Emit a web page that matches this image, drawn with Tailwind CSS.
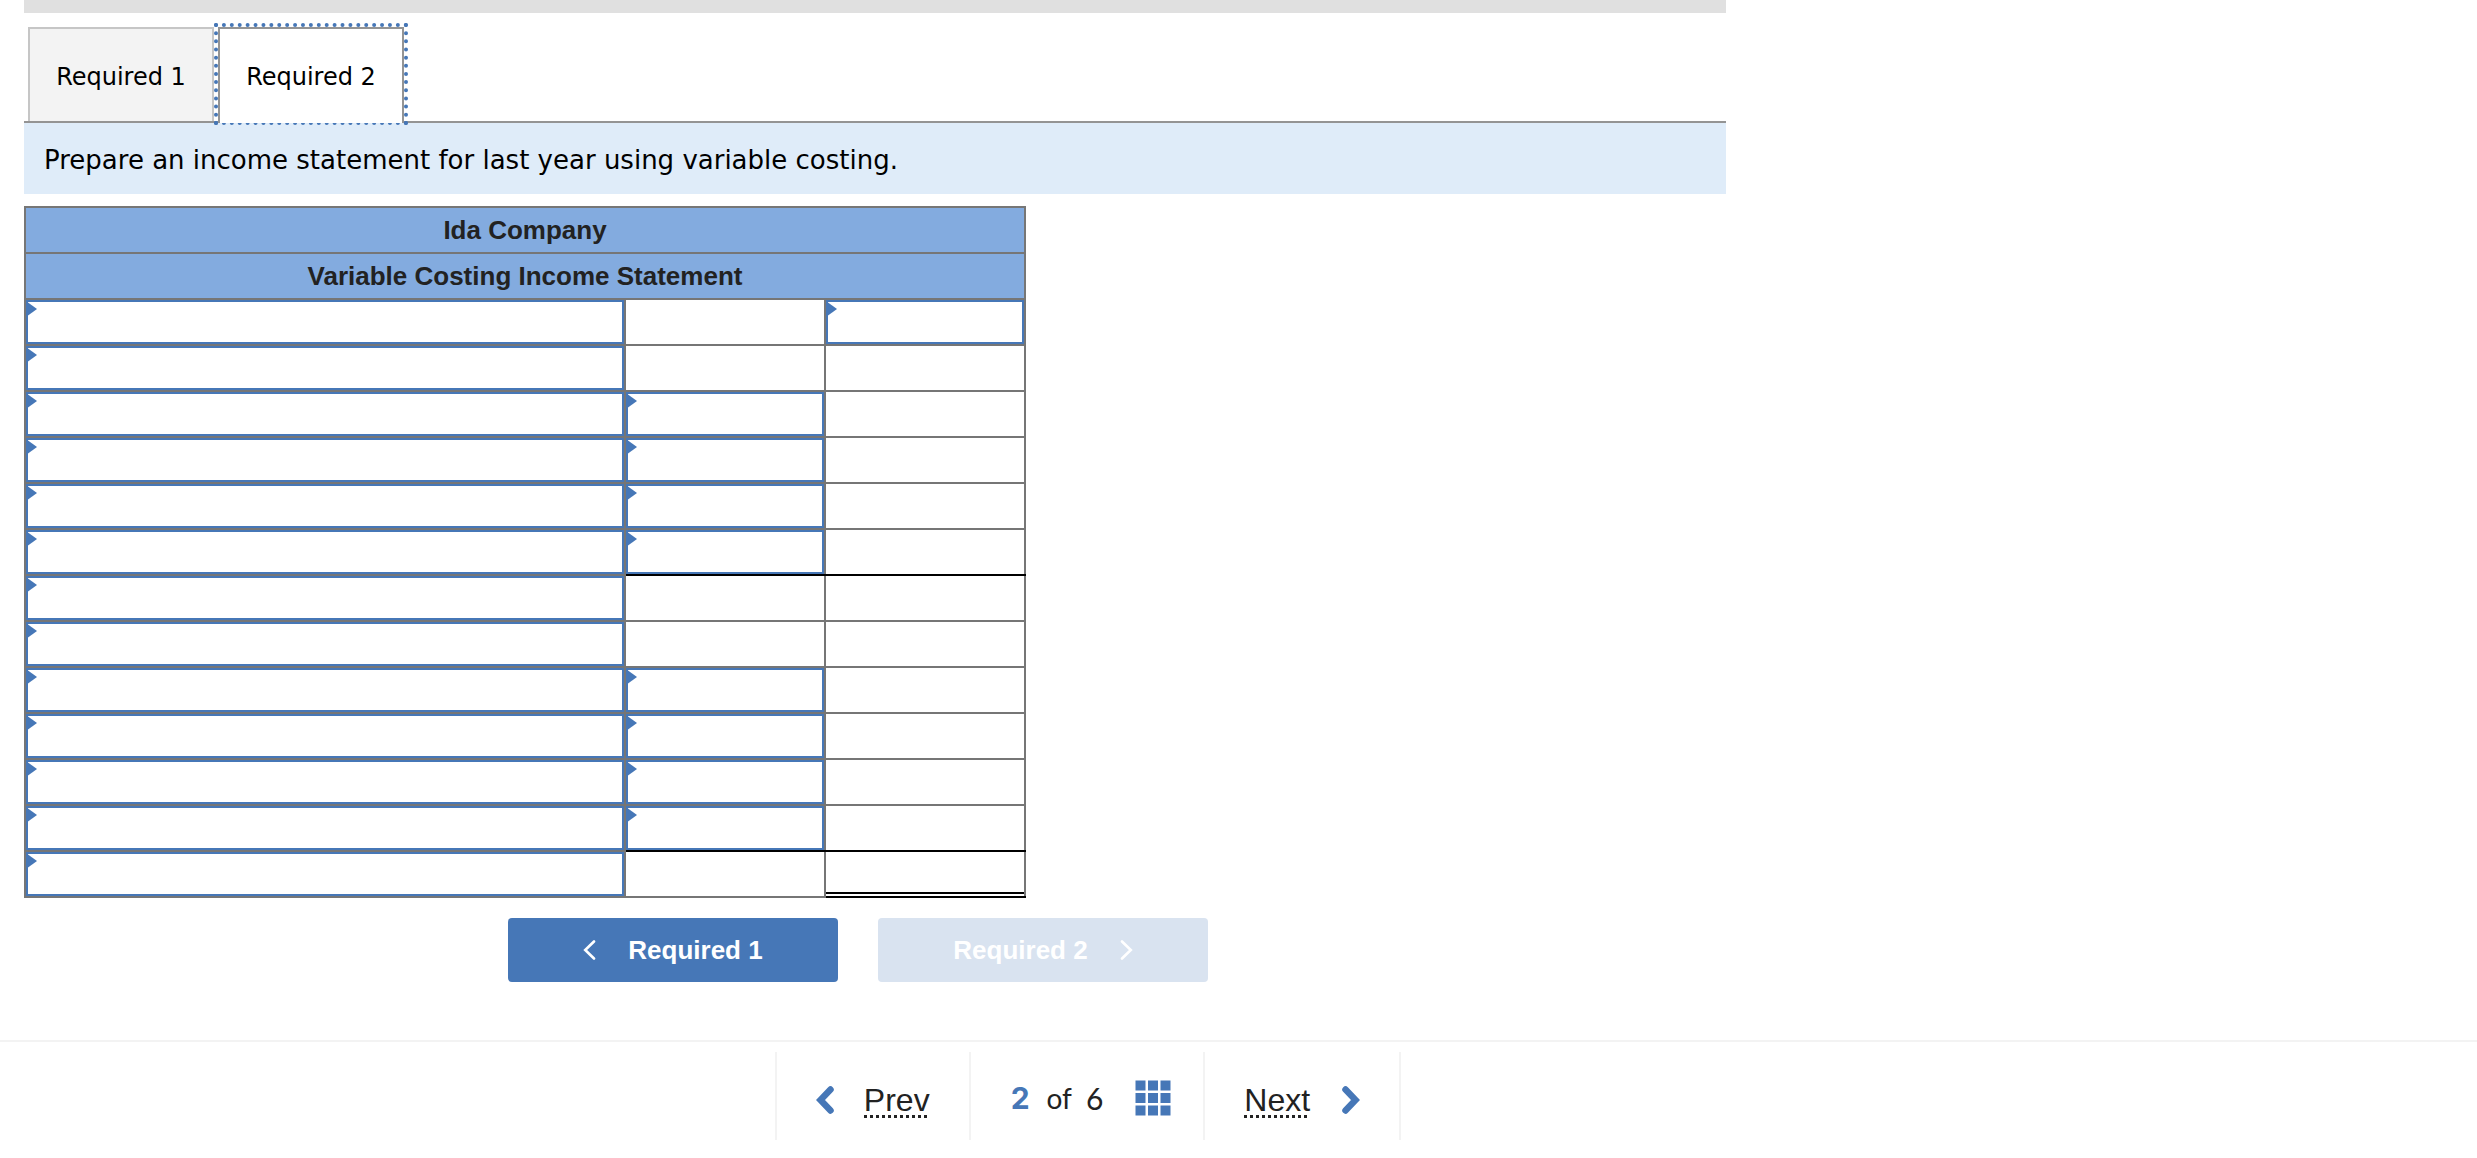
<!DOCTYPE html>
<html lang="en">
<head>
<meta charset="utf-8">
<meta name="viewport" content="width=device-width, initial-scale=1">
<title>Ida Company</title>
<script src="https://cdn.jsdelivr.net/npm/@tailwindcss/browser@4"></script>
</head>
<body class="bg-white font-['Liberation_Sans',Arial,sans-serif] text-[#222]">

<main class="mx-6 max-w-[1702px]">
  <div class="h-[13px] bg-[#e0e0e0]"></div>

  <div role="tablist" class="mt-[14px] flex h-24 items-start gap-1 border-b-2 border-[#949494] pl-1 font-['DejaVu_Sans',Verdana,sans-serif] text-[24px] text-black">
    <button role="tab" aria-selected="false" class="h-[94px] w-[186px] border-2 border-b-0 border-[#c6c6c6] bg-[#f3f3f3] pt-1">Required 1</button>
    <button role="tab" aria-selected="true" class="relative h-[94px] w-[186px] border-2 border-b-0 border-[#949494] bg-white pt-1 outline-4 outline-dotted outline-[#4677b7]">Required 2<span class="absolute inset-x-0 top-full z-10 h-[2px] bg-white"></span></button>
  </div>

  <p class="bg-[#dfecf9] px-5 pt-[19px] pb-[15px] font-['DejaVu_Sans',Verdana,sans-serif] text-[26px] leading-[37px] text-black">Prepare an income statement for last year using variable costing.</p>

  <table class="mt-3 w-full max-w-[1002px] table-fixed border-collapse text-[26px] leading-[44px]">
    <colgroup><col class="w-3/5"><col class="w-1/5"><col class="w-1/5"></colgroup>
    <thead>
      <tr><th colspan="3" class="h-[46px] border-2 border-[#767676] bg-[#83abdf] p-0 text-center font-bold">Ida Company</th></tr>
      <tr><th colspan="3" class="h-[46px] border-2 border-[#767676] bg-[#83abdf] p-0 text-center font-bold">Variable Costing Income Statement</th></tr>
    </thead>
    <tbody id="rows"></tbody>
  </table>

  <div class="mt-5 flex justify-center gap-10 pr-[34px] text-[26px] font-bold text-white">
    <button class="flex h-16 w-[330px] items-center justify-center gap-8 rounded-[4px] bg-[#4677b7]">
      <svg class="h-5 w-[13px]" viewBox="0 0 13 20" fill="none" stroke="currentColor" stroke-width="2.6" stroke-linecap="round"><path d="M11 1.5 2.2 10 11 18.5"/></svg>
      <span>Required 1</span>
    </button>
    <button disabled class="flex h-16 w-[330px] items-center justify-center gap-8 rounded-[4px] bg-[#d9e3f0]">
      <span>Required 2</span>
      <svg class="h-5 w-[13px]" viewBox="0 0 13 20" fill="none" stroke="currentColor" stroke-width="2.6" stroke-linecap="round"><path d="M2 1.5 10.8 10 2 18.5"/></svg>
    </button>
  </div>
</main>

<footer class="mt-[58px] flex justify-center border-t-2 border-[#f3f3f3] pt-[10px] pr-[301px]">
  <nav aria-label="Questions" class="flex h-[88px] divide-x-2 divide-[#f3f3f3] border-x-2 border-[#f3f3f3]">
    <a href="#" class="flex items-center gap-[30px] px-[39px] pt-2 text-[32px]">
      <svg class="h-7 w-[18px] text-[#4677b7]" viewBox="0 0 18 28" fill="none" stroke="currentColor" stroke-width="6.5" stroke-linecap="round" stroke-linejoin="miter"><path d="M14.500 3.500 4.500 14 14.500 24.500"/></svg>
      <span class="bg-[repeating-linear-gradient(90deg,#222_0_3px,transparent_3px_6px)] bg-[length:100%_3px] bg-bottom bg-no-repeat leading-[36px]">Prev</span>
    </a>
    <div class="flex items-center pr-8 pl-10 pt-1 font-['Lato',sans-serif] text-[30px]">
      <b class="font-['Inter',sans-serif] text-[#4677b7]">2</b>
      <span class="ml-[17px] text-[28px]">of</span>
      <span class="ml-[14px]">6</span>
      <button aria-label="Question list" class="ml-8 text-[#4677b7]">
        <svg class="h-9 w-9" viewBox="0 0 36 36" fill="currentColor"><path d="M.5.5h10v10H.5zM13 .5h10v10H13zM25.5.5h10v10h-10zM.5 13h10v10H.5zM13 13h10v10H13zM25.5 13h10v10h-10zM.5 25.500h10v10H.5zM13 25.500h10v10H13zM25.5 25.500h10v10h-10z"/></svg>
      </button>
    </div>
    <a href="#" class="flex items-center gap-8 px-[39px] pt-2 text-[32px]">
      <span class="bg-[repeating-linear-gradient(90deg,#222_0_3px,transparent_3px_6px)] bg-[length:100%_3px] bg-bottom bg-no-repeat leading-[36px]">Next</span>
      <svg class="h-7 w-[18px] text-[#4677b7]" viewBox="0 0 18 28" fill="none" stroke="currentColor" stroke-width="6.5" stroke-linecap="round" stroke-linejoin="miter"><path d="M3.500 3.500 13.500 14 3.500 24.500"/></svg>
    </a>
  </nav>
</footer>

<script>
  // One entry per statement line: which cells take an entry (1) and how the amount cells are ruled.
  const lines = [
    [1, 0, 1], [1, 0, 0], [1, 1, 0], [1, 1, 0], [1, 1, 0], [1, 1, 0, 'total'], [1, 0, 0],
    [1, 0, 0], [1, 1, 0], [1, 1, 0], [1, 1, 0], [1, 1, 0, 'total'], [1, 0, 0, 'final']
  ];
  const names = ['description', 'amount', 'total'];
  const entry = (label) => `<div class="relative h-[44px]"><input type="text" aria-label="${label}" class="block h-[44px] w-full border-2 border-[#4677b7] bg-white px-4 outline-none"><svg class="absolute top-[2px] left-[2px] h-[14px] w-[9px]" viewBox="0 0 9 14" fill="#4677b7"><path d="M0 .5 9 7 0 13.500z"/></svg></div>`;
  document.getElementById('rows').innerHTML = lines.map((line, r) => '<tr>' + names.map((name, c) => {
    const ruled = (line[3] === 'total' && c > 0) || (line[3] === 'final' && c === 2);
    const box = ruled
      ? 'h-[46px] border-2 border-[#767676] border-b-black p-0 align-top'
      : 'h-[46px] border-2 border-[#767676] p-0 align-top';
    const inner = line[c] ? entry(`Line ${r + 1} ${name}`)
      : line[3] === 'final' && c === 2 ? '<div class="h-[42px] border-b-2 border-black"></div>' : '';
    return `<td class="${box}">${inner}</td>`;
  }).join('') + '</tr>').join('');
</script>
</body>
</html>
